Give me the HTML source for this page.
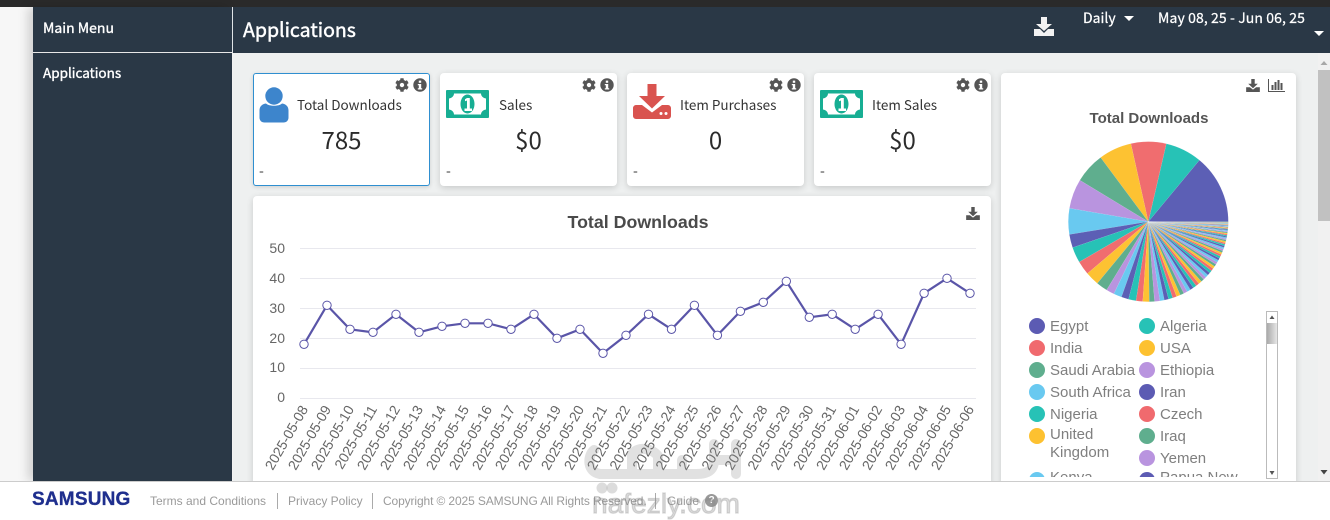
<!DOCTYPE html>
<html><head><meta charset="utf-8"><title>Applications</title>
<style>
*{box-sizing:border-box}
html,body{margin:0;padding:0;width:1330px;height:520px;overflow:hidden;background:#f7f7f7;font-family:"Noto Sans CJK JP","Liberation Sans",sans-serif}
#top{position:absolute;left:0;top:0;width:1330px;height:7px;background:#2a2a2a}
#side{position:absolute;left:33px;top:7px;width:199px;height:474px;background:#2a3846;box-shadow:-5px 0 10px rgba(0,0,0,.16)}
#hline{position:absolute;left:33px;top:52px;width:199px;height:1px;background:#e8e8e8}
#vline{position:absolute;left:232px;top:7px;width:1px;height:46px;background:#dfe3e6}
#head{position:absolute;left:233px;top:7px;width:1097px;height:46px;background:#2a3846}
#main{position:absolute;left:233px;top:53px;width:1097px;height:428px;background:#eef0f0}
.w{position:absolute;color:#fff;white-space:nowrap;-webkit-text-stroke:.35px #fff}
.card{position:absolute;top:73px;width:177px;height:113px;background:#fff;border-radius:4px;box-shadow:0 2px 7px rgba(0,0,0,.16)}
.card .t{position:absolute;top:21px;font-size:13.5px;line-height:20px;color:#333;white-space:nowrap}
.card .n{position:absolute;left:0;width:100%;top:50px;margin-top:-2px;text-align:center;font-size:24px;line-height:36px;color:#2b2b2b}
.card .d{position:absolute;left:6px;top:89px;font-size:14px;line-height:18px;color:#333}
.card svg{position:absolute}
.panel{position:absolute;background:#fff;border-radius:4px;box-shadow:0 2px 7px rgba(0,0,0,.16)}
#foot{position:absolute;left:0;top:481px;width:1330px;height:39px;background:#fff;border-top:1px solid #ccc}
#foot span{position:absolute;top:11px;font:12px/16px "Liberation Sans",sans-serif;color:#9a9a9a;white-space:nowrap}
#foot i{position:absolute;top:11px;width:1px;height:16px;background:#aaa}
.lg{position:absolute;font:15px/18px "Liberation Sans",sans-serif;color:#7f7f7f;white-space:nowrap}
.dot{position:absolute;width:16px;height:16px;border-radius:50%}
</style></head><body>
<div id="top"></div>
<div id="side"></div><div id="hline"></div><div id="vline"></div>
<div id="head"></div><div id="main"></div>

<div class="w" style="left:43px;top:18px;font-size:14px;line-height:20px">Main Menu</div>
<div class="w" style="left:43px;top:62px;font-size:13.500px;line-height:20px">Applications</div>
<div class="w" style="left:243px;top:15px;font-size:19.500px;line-height:28px;-webkit-text-stroke:.45px #fff">Applications</div>
<div class="w" style="left:1083px;top:8px;font-size:14px;line-height:20px;-webkit-text-stroke:.25px #fff">Daily</div>
<div class="w" style="left:1158px;top:8px;font-size:14px;line-height:20px;letter-spacing:.1px;-webkit-text-stroke:.25px #fff">May 08, 25 - Jun 06, 25</div>

<svg style="position:absolute;left:0;top:0" width="1330" height="60">
<path d="M1124 16h10l-5 5z M1314 31h10l-5 5z" fill="#fff"/>
<path fill="#f2f2f2" d="M1041 17h6v7h5l-8 7-8-7h5z M1034 29h6l4 4 4-4h6v7h-20z"/>
</svg>

<!-- scrollbar -->
<div style="position:absolute;left:1318px;top:53px;width:12px;height:428px;background:#f1f1f1"></div>
<div style="position:absolute;left:1318px;top:70px;width:12px;height:151px;background:#c1c1c1"></div>
<svg style="position:absolute;left:1318px;top:53px" width="12" height="428"><path d="M2.500 12L6 8l3.500 4z" fill="#a8a8a8"/><path d="M2.500 417L6 421.500l3.500-4.500z" fill="#444"/></svg>

<svg width="0" height="0" style="position:absolute"><symbol id="cog" viewBox="0 0 512 512"><path fill="#555" d="M487.4 315.7l-42.6-24.6c4.3-23.2 4.3-47 0-70.2l42.6-24.6c4.9-2.8 7.1-8.6 5.500-14-11.1-35.6-30-67.8-54.7-94.6-3.8-4.1-10-5.100-14.8-2.300L380.8 110c-17.9-15.4-38.5-27.3-60.8-35.100V25.800c0-5.600-3.900-10.500-9.400-11.700-36.700-8.200-74.300-7.800-109.200 0-5.500 1.200-9.400 6.100-9.400 11.700V75c-22.200 7.900-42.800 19.800-60.800 35.100L88.700 85.500c-4.900-2.800-11-1.900-14.800 2.300-24.700 26.700-43.600 58.900-54.700 94.600-1.700 5.400.6 11.200 5.500 14L67.300 221c-4.300 23.200-4.300 47 0 70.200l-42.600 24.600c-4.900 2.800-7.100 8.600-5.500 14 11.100 35.600 30 67.800 54.700 94.600 3.800 4.100 10 5.100 14.800 2.300l42.600-24.600c17.900 15.400 38.500 27.300 60.800 35.100v49.200c0 5.600 3.900 10.500 9.400 11.700 36.700 8.200 74.300 7.800 109.200 0 5.500-1.200 9.400-6.100 9.400-11.700v-49.200c22.200-7.900 42.800-19.800 60.800-35.100l42.600 24.600c4.900 2.800 11 1.900 14.800-2.300 24.700-26.700 43.600-58.900 54.700-94.600 1.500-5.500-.7-11.300-5.600-14.100zM256 336c-44.100 0-80-35.900-80-80s35.900-80 80-80 80 35.900 80 80-35.900 80-80 80z"/></symbol>
<symbol id="inf" viewBox="0 0 14 14"><circle cx="7" cy="7" r="6.700" fill="#555"/><rect x="5.800" y="2.600" width="2.400" height="2.200" fill="#fff"/><path d="M4.800 6h3.400v4.200h1v1.300H4.800v-1.300h1V7.300h-1z" fill="#fff"/></symbol>
<symbol id="money" viewBox="0 0 43 28"><rect width="43" height="28" rx="1" fill="#17ae93"/><path d="M8 3.500h27c0 2.500 2 4.500 5 5v11c-3 .5-5 2.500-5 5H8c0-2.500-2-4.500-5-5v-11c3-.5 5-2.500 5-5z" fill="#fff"/><ellipse cx="21.500" cy="14" rx="7" ry="9.500" fill="#17ae93"/><path d="M21 8h2.800v10.500H26V21h-7.500v-2.500H21v-8l-2 .8V9.200z" fill="#fff"/></symbol>
<symbol id="dl" viewBox="0 0 20 19"><path d="M7.500 0h5v7h4.500L10 13.500 3 7h4.500z" fill="#555"/><path d="M0 12h5.500l4.500 3.500 4.500-3.500H20v7H0z" fill="#555"/></symbol></svg>

<div class="card" style="left:253px;border-radius:3px;box-shadow:inset 0 0 0 1px #2f8fd0,0 1px 4px rgba(0,0,0,.14)">
<svg style="left:6px;top:14px" width="30" height="36"><circle cx="15" cy="9" r="8.700" fill="#3d85cc"/><path d="M7 16.500c3 3 13 3 16 0 4 .5 6.500 3 6.500 7v7c0 3-2 5-5 5H5.500c-3 0-5-2-5-5v-7c0-4 2.500-6.500 6.500-7z" fill="#3d85cc"/></svg>
<div class="t" style="left:44px">Total Downloads</div><div class="n">785</div><div class="d">-</div>
<svg style="left:142px;top:5px" width="14" height="14"><use href="#cog"/></svg><svg style="left:160px;top:5px" width="14" height="14"><use href="#inf"/></svg></div>

<div class="card" style="left:440px">
<svg style="left:6px;top:17px" width="43" height="28"><use href="#money"/></svg>
<div class="t" style="left:59px">Sales</div><div class="n">$0</div><div class="d">-</div>
<svg style="left:142px;top:5px" width="14" height="14"><use href="#cog"/></svg><svg style="left:160px;top:5px" width="14" height="14"><use href="#inf"/></svg></div>

<div class="card" style="left:627px">
<svg style="left:6px;top:11px" width="38" height="35"><path d="M14.500 0h9v12h8.500L19 24.500 6 12h8.500z" fill="#d9534f"/><path d="M3 21h6l10 7.500L29 21h6c1.500 0 3 1.500 3 3v8c0 1.500-1.500 3-3 3H3c-1.500 0-3-1.500-3-3v-8c0-1.500 1.500-3 3-3z" fill="#d9534f"/><circle cx="28" cy="29.500" r="1.500" fill="#fff"/><circle cx="33" cy="29.500" r="1.500" fill="#fff"/></svg>
<div class="t" style="left:53px">Item Purchases</div><div class="n">0</div><div class="d">-</div>
<svg style="left:142px;top:5px" width="14" height="14"><use href="#cog"/></svg><svg style="left:160px;top:5px" width="14" height="14"><use href="#inf"/></svg></div>

<div class="card" style="left:814px">
<svg style="left:6px;top:17px" width="43" height="28"><use href="#money"/></svg>
<div class="t" style="left:58px">Item Sales</div><div class="n">$0</div><div class="d">-</div>
<svg style="left:142px;top:5px" width="14" height="14"><use href="#cog"/></svg><svg style="left:160px;top:5px" width="14" height="14"><use href="#inf"/></svg></div>

<div class="panel" style="left:253px;top:196px;width:738px;height:290px"></div>
<div class="panel" style="left:1001px;top:73px;width:295px;height:413px"></div>

<svg style="position:absolute;left:0;top:0" width="1330" height="481" font-family="Liberation Sans, sans-serif">
<text x="638" y="228" text-anchor="middle" font-size="17.800" font-weight="bold" fill="#4a4a4a">Total Downloads</text>
<g stroke="#e8e8ee" stroke-width="1"><path d="M300 248.500H976M300 278.500H976M300 308.500H976M300 338.500H976M300 368.500H976M300 398.500H976"/></g>
<g font-size="14" fill="#666" text-anchor="end"><text x="285" y="253">50</text><text x="285" y="283">40</text><text x="285" y="313">30</text><text x="285" y="343">20</text><text x="285" y="372">10</text><text x="285" y="402">0</text></g>
<g transform="translate(0,.3)">
<polyline fill="none" stroke="#5a55a8" stroke-width="2.200" points="304,344 327,305 350,329 373,332 396,314 419,332 442,326 465,323 488,323 511,329 534,314 557,338 580,329 603,353 626,335 648.500,314 671.500,329 694.400,305 717.400,335 740.400,311 763.300,302 786.300,281 809.300,317 832.200,314 855.200,329 878.100,314 901.100,344 924.100,293 947,278 970,293"/>
<g fill="#fff" stroke="#5a55a8" stroke-width="1">
<circle cx="304" cy="344" r="4.200"/><circle cx="327" cy="305" r="4.200"/><circle cx="350" cy="329" r="4.200"/><circle cx="373" cy="332" r="4.200"/><circle cx="396" cy="314" r="4.200"/><circle cx="419" cy="332" r="4.200"/><circle cx="442" cy="326" r="4.200"/><circle cx="465" cy="323" r="4.200"/><circle cx="488" cy="323" r="4.200"/><circle cx="511" cy="329" r="4.200"/><circle cx="534" cy="314" r="4.200"/><circle cx="557" cy="338" r="4.200"/><circle cx="580" cy="329" r="4.200"/><circle cx="603" cy="353" r="4.200"/><circle cx="626" cy="335" r="4.200"/><circle cx="648.500" cy="314" r="4.200"/><circle cx="671.500" cy="329" r="4.200"/><circle cx="694.400" cy="305" r="4.200"/><circle cx="717.400" cy="335" r="4.200"/><circle cx="740.400" cy="311" r="4.200"/><circle cx="763.300" cy="302" r="4.200"/><circle cx="786.300" cy="281" r="4.200"/><circle cx="809.300" cy="317" r="4.200"/><circle cx="832.200" cy="314" r="4.200"/><circle cx="855.200" cy="329" r="4.200"/><circle cx="878.100" cy="314" r="4.200"/><circle cx="901.100" cy="344" r="4.200"/><circle cx="924.100" cy="293" r="4.200"/><circle cx="947" cy="278" r="4.200"/><circle cx="970" cy="293" r="4.200"/>
</g></g>
<g font-size="14" fill="#666" text-anchor="end">
<text transform="translate(308.500,409) rotate(-60)">2025-05-08</text>
<text transform="translate(331.500,409) rotate(-60)">2025-05-09</text>
<text transform="translate(354.500,409) rotate(-60)">2025-05-10</text>
<text transform="translate(377.500,409) rotate(-60)">2025-05-11</text>
<text transform="translate(400.500,409) rotate(-60)">2025-05-12</text>
<text transform="translate(423.500,409) rotate(-60)">2025-05-13</text>
<text transform="translate(446.500,409) rotate(-60)">2025-05-14</text>
<text transform="translate(469.500,409) rotate(-60)">2025-05-15</text>
<text transform="translate(492.500,409) rotate(-60)">2025-05-16</text>
<text transform="translate(515.500,409) rotate(-60)">2025-05-17</text>
<text transform="translate(538.500,409) rotate(-60)">2025-05-18</text>
<text transform="translate(561.500,409) rotate(-60)">2025-05-19</text>
<text transform="translate(584.500,409) rotate(-60)">2025-05-20</text>
<text transform="translate(607.500,409) rotate(-60)">2025-05-21</text>
<text transform="translate(630.500,409) rotate(-60)">2025-05-22</text>
<text transform="translate(653,409) rotate(-60)">2025-05-23</text>
<text transform="translate(676,409) rotate(-60)">2025-05-24</text>
<text transform="translate(699,409) rotate(-60)">2025-05-25</text>
<text transform="translate(722,409) rotate(-60)">2025-05-26</text>
<text transform="translate(745,409) rotate(-60)">2025-05-27</text>
<text transform="translate(768,409) rotate(-60)">2025-05-28</text>
<text transform="translate(791,409) rotate(-60)">2025-05-29</text>
<text transform="translate(814,409) rotate(-60)">2025-05-30</text>
<text transform="translate(836.700,409) rotate(-60)">2025-05-31</text>
<text transform="translate(859.700,409) rotate(-60)">2025-06-01</text>
<text transform="translate(882.600,409) rotate(-60)">2025-06-02</text>
<text transform="translate(905.600,409) rotate(-60)">2025-06-03</text>
<text transform="translate(928.600,409) rotate(-60)">2025-06-04</text>
<text transform="translate(951.500,409) rotate(-60)">2025-06-05</text>
<text transform="translate(974.500,409) rotate(-60)">2025-06-06</text>
</g>
<text x="1149" y="123" text-anchor="middle" font-size="15" font-weight="bold" fill="#555">Total Downloads</text>
<g id="pie"></g>
<use href="#dl" x="966" y="207" width="14" height="13"/>
<use href="#dl" x="1246" y="79" width="14" height="13"/>
<path d="M1268.500 79v12.500H1285" fill="none" stroke="#555"/>
<path d="M1271.500 85h2v5h-2zM1274.500 82h2v8h-2zM1277.500 80h2v10h-2zM1280.500 83h2v7h-2z" fill="#555"/>
</svg>

<!-- legend -->
<div style="position:absolute;left:1002px;top:311px;width:264px;height:166px;overflow:hidden">
<div class="dot" style="left:27px;top:7px;background:#5c5bb3"></div><div class="lg" style="left:48px;top:7px">Egypt</div>
<div class="dot" style="left:137px;top:7px;background:#27c2b6"></div><div class="lg" style="left:158px;top:7px">Algeria</div>
<div class="dot" style="left:27px;top:29px;background:#f06a6e"></div><div class="lg" style="left:48px;top:29px">India</div>
<div class="dot" style="left:137px;top:29px;background:#fdc130"></div><div class="lg" style="left:158px;top:29px">USA</div>
<div class="dot" style="left:27px;top:51px;background:#5fae8e"></div><div class="lg" style="left:48px;top:51px">Saudi Arabia</div>
<div class="dot" style="left:137px;top:51px;background:#b994df"></div><div class="lg" style="left:158px;top:51px">Ethiopia</div>
<div class="dot" style="left:27px;top:73px;background:#69c9f0"></div><div class="lg" style="left:48px;top:73px">South Africa</div>
<div class="dot" style="left:137px;top:73px;background:#5c5bb3"></div><div class="lg" style="left:158px;top:73px">Iran</div>
<div class="dot" style="left:27px;top:95px;background:#27c2b6"></div><div class="lg" style="left:48px;top:95px">Nigeria</div>
<div class="dot" style="left:137px;top:95px;background:#f06a6e"></div><div class="lg" style="left:158px;top:95px">Czech</div>
<div class="dot" style="left:27px;top:117px;background:#fdc130"></div><div class="lg" style="left:48px;top:115px">United</div><div class="lg" style="left:48px;top:133px">Kingdom</div>
<div class="dot" style="left:137px;top:117px;background:#5fae8e"></div><div class="lg" style="left:158px;top:117px">Iraq</div>
<div class="dot" style="left:137px;top:139px;background:#b994df"></div><div class="lg" style="left:158px;top:139px">Yemen</div>
<div class="dot" style="left:27px;top:161px;background:#69c9f0"></div><div class="lg" style="left:48px;top:158px">Kenya</div>
<div class="dot" style="left:137px;top:161px;background:#5c5bb3"></div><div class="lg" style="left:158px;top:158px">Papua New</div>
</div>
<div style="position:absolute;left:1266px;top:311px;width:12px;height:168px;background:#fff;border:1px solid #bbb"></div>
<div style="position:absolute;left:1267px;top:323px;width:10px;height:21px;background:linear-gradient(90deg,#aaa,#e6e6e6)"></div>
<svg style="position:absolute;left:1266px;top:311px" width="12" height="168"><path d="M3.500 8L6 4.500 8.500 8z" fill="#555"/><path d="M3.500 160L6 164l2.500-4z" fill="#555"/></svg>

<div id="foot">
<div style="position:absolute;left:32px;top:6px;font:bold 19px/24px 'Liberation Sans',sans-serif;color:#1f2f8e;letter-spacing:.2px;-webkit-text-stroke:.3px #1f2f8e">SAMSUNG</div>
<span style="left:150px">Terms and Conditions</span><i style="left:277px"></i>
<span style="left:288px">Privacy Policy</span><i style="left:372px"></i>
<span style="left:383px;letter-spacing:-.12px">Copyright © 2025 SAMSUNG All Rights Reserved.</span><i style="left:655px"></i>
<span style="left:667px">Guide</span>
<div style="position:absolute;left:705px;top:12px;width:13px;height:13px;border-radius:50%;background:#999;color:#fff;font:bold 10px/13px 'Liberation Sans',sans-serif;text-align:center">?</div>
</div>

<!-- watermark -->
<svg style="position:absolute;left:570px;top:430px" width="190" height="90" font-family="Liberation Sans, sans-serif">
<g fill="none" stroke="#8c8c8c" stroke-opacity=".26" stroke-width="10" stroke-linecap="round" stroke-linejoin="round">
<path d="M24 20c-7 6-7 22 6 24h96c12 0 18-4 18-14V14M62 44V24c6-8 20-6 26 2v18M112 44V30M166 44V14M144 30h22"/>
</g>
<circle cx="32" cy="58" r="5.500" fill="#8c8c8c" fill-opacity=".3"/><circle cx="42" cy="58" r="5.500" fill="#8c8c8c" fill-opacity=".3"/>
<text x="22" y="83" font-size="28" fill="#8c8c8c" fill-opacity=".3" stroke="#8c8c8c" stroke-opacity=".3" stroke-width="1.200" textLength="148">nafezly.com</text>
</svg>

<script>
(function(){
var c=['#5c5fb5','#27c2b6','#f06d6f','#fdc232','#5fae8e','#b994df','#69c9f0'];
var a=[0,50.3,77,102.6,126.6,148.8,170.3,189.2,198.9,210.3,220.4,230.4,238.6,244.5,250.4,255.7,261.2,266,270.7,274.5,278.4];
var n=62,w=[],s=0,i;
for(i=0;i<n;i++){var v=3.6*Math.pow(1-i/n,1.7)+.2;w.push(v);s+=v}
var cur=278.4;
for(i=0;i<n;i++){cur+=w[i]*(81.6/s);a.push(cur)}
var cx=1148.3,cy=221.7,r=80,h='';
for(i=0;i<a.length-1;i++){
var p=a[i]*Math.PI/180,q=a[i+1]*Math.PI/180;
h+='<path fill="'+c[i%7]+'" stroke="rgba(255,255,255,.18)" stroke-width=".3" d="M'+cx+' '+cy+'L'+(cx+r*Math.cos(p)).toFixed(2)+' '+(cy-r*Math.sin(p)).toFixed(2)+'A'+r+' '+r+' 0 0 0 '+(cx+r*Math.cos(q)).toFixed(2)+' '+(cy-r*Math.sin(q)).toFixed(2)+'Z"/>';
}
document.getElementById('pie').innerHTML=h;
})();
</script>
</body></html>
